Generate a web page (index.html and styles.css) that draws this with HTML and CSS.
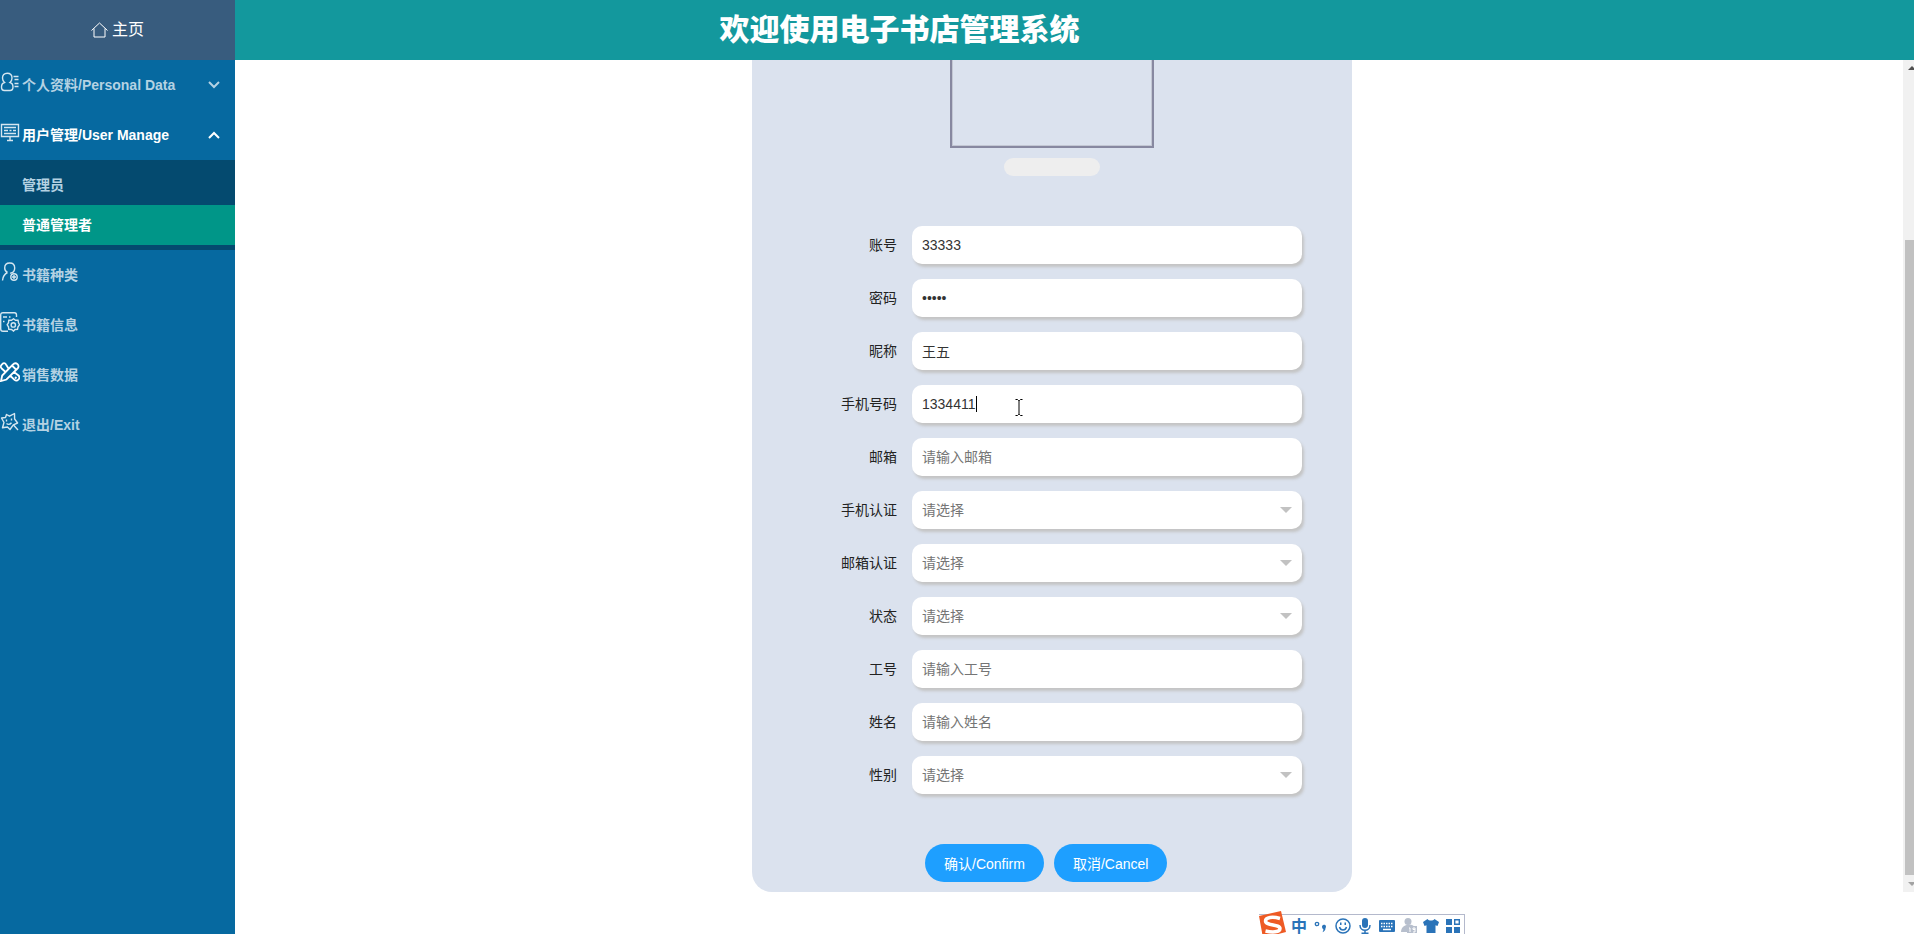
FILE: index.html
```html
<!DOCTYPE html>
<html lang="zh-CN">
<head>
    <meta charset="UTF-8">
    <meta name="viewport" content="width=device-width, initial-scale=1.0">
    <link rel="stylesheet" href="styles.css">
    <title>电子书店管理系统</title>
</head>
<body>
    <nav class="sidebar">
        <a class="home" href="#">
            <svg width="17" height="16" viewBox="0 0 17 16"><path d="M.5 8.500 8.500 1l8 7.500M3 6.500V15h11V6.500"/></svg>
            <span>主页</span>
        </a>

        <a class="menu-item" href="#">
            <svg class="menu-icon" viewBox="0 0 20 20"><path d="M7.200 1.200c3 0 4.800 2 4.800 4.800 0 2-.8 3.500-2 4.500 2 .5 3 2 3 4.500 0 2.500-.8 3.500-3 3.500H4.500c-2.200 0-3-1-3-3.500s1-4 3-4.500c-1.200-1-2-2.500-2-4.500 0-2.800 1.700-4.800 4.700-4.800zM13.500 4.500h5M14.500 7.500h4M14.500 11.500h4M14.500 14.500h4"/></svg>
            <span>个人资料/Personal Data</span>
            <svg class="chevron" viewBox="0 0 12 8"><path d="m1 1 5 5 5-5"/></svg>
        </a>
        <a class="menu-item open" href="#">
            <svg class="menu-icon" viewBox="0 0 20 20"><path d="M1.500 2.500h17v12h-17zM4 5.500h12M4 8.500h4M9.500 8.500h2M13 8.500h3M4 11.500h12M10 14.500v4M7 18.500h6"/></svg>
            <span>用户管理/User Manage</span>
            <svg class="chevron" viewBox="0 0 12 8"><path d="m1 7 5-5 5 5"/></svg>
        </a>
        <div class="submenu">
            <a href="#">管理员</a>
            <a class="active" href="#">普通管理者</a>
        </div>
        <a class="menu-item" href="#">
            <svg class="menu-icon" viewBox="0 0 20 20"><path d="M7.500 10.500C5.500 9.500 4.700 8 4.700 6c0-3 2-5 5-5s5 2 5 5-2 5-4.500 5.200M7.500 10.500c-3 1.500-4.700 4-5 8"/><circle cx="14" cy="15" r="3.200"/><path d="M12 15h4M14 13v4"/></svg>
            <span>书籍种类</span>
        </a>
        <a class="menu-item" href="#">
            <svg class="menu-icon" viewBox="0 0 20 20"><path d="M16.500 5V3c0-1.500-.8-2.300-2-2.300H3C1.500.7.700 1.500.7 3v14c0 1.500.8 2.300 2.300 2.300h5M3 5h4M9 5h1.500M3 9.500h1.500"/><path d="m13.500 6.800 2 1.500 2.500-.1.500 2.500 1 2.100-1.500 2-.5 2.600-2.500.1-1.500 1.600-2-1.600-2.700-.1-.3-2.600-1.300-2 1.300-2.100.3-2.500 2.700.1z"/><circle cx="13.300" cy="12.900" r="2.200"/></svg>
            <span>书籍信息</span>
        </a>
        <a class="menu-item" href="#">
            <svg class="menu-icon bold" viewBox="0 0 20 20"><path d="M1 19l1.200-5.500L13 2.500c1.300-1.600 3.200-1.600 4.500-.3s1.400 3 0 4.300L6.500 17.500zM12.500 4 16 7.500M8.500 6.500 6 2.500C5 .8 3.500.8 2 2.300S.3 5.300 1.700 6.500L5 9.500M14 10l4.500 3.500c1.200 1.200 1.200 2.700 0 4s-2.700 1.500-4 .3L10.500 14M15 16.500l1.500-1.500"/></svg>
            <span>销售数据</span>
        </a>
        <a class="menu-item" href="#">
            <svg class="menu-icon" viewBox="0 0 20 20"><path d="M9.500 4.200 14.500 1.500 14.600 7l3 4-4.300 1.800L10 17.500 7.500 15l-5 .8L4 10.500 1.500 6l4-.5L6.500 2.500z" stroke-linejoin="round"/><path d="m13.500 13 4.500 5M6.500 7.500v2M11.500 6.500v2M6.500 11.500c1.500 1.200 3.500 1 5-.8"/></svg>
            <span>退出/Exit</span>
        </a>
    </nav>

    <div class="page">
        <header class="topbar">
            <h1>欢迎使用电子书店管理系统</h1>
        </header>

        <main class="viewport">
            <div class="scroll-area">
                <form class="card">
                    <div class="avatar"></div>
                    <button class="upload" type="button" aria-label="上传头像"></button>

                    <div class="row">
                        <label for="account">账号</label>
                        <div class="field"><input id="account" type="text" value="33333"></div>
                    </div>
                    <div class="row">
                        <label for="password">密码</label>
                        <div class="field"><input id="password" type="password" value="12345"></div>
                    </div>
                    <div class="row">
                        <label for="nickname">昵称</label>
                        <div class="field"><input id="nickname" type="text" value="王五"></div>
                    </div>
                    <div class="row">
                        <label for="phone">手机号码</label>
                        <div class="field">
                            <input id="phone" type="text" value="1334411">
                            <span class="caret"></span>
                            <svg class="ibeam" viewBox="0 0 8 17"><path d="M.5.5h2l1 1h1l1-1h2M4 1.500v14M.5 16.500h2l1-1h1l1 1h2"/></svg>
                        </div>
                    </div>
                    <div class="row">
                        <label for="email">邮箱</label>
                        <div class="field"><input id="email" type="text" placeholder="请输入邮箱"></div>
                    </div>
                    <div class="row">
                        <label for="phone-auth">手机认证</label>
                        <div class="field select"><select id="phone-auth"><option>请选择</option></select></div>
                    </div>
                    <div class="row">
                        <label for="email-auth">邮箱认证</label>
                        <div class="field select"><select id="email-auth"><option>请选择</option></select></div>
                    </div>
                    <div class="row">
                        <label for="status">状态</label>
                        <div class="field select"><select id="status"><option>请选择</option></select></div>
                    </div>
                    <div class="row">
                        <label for="job-number">工号</label>
                        <div class="field"><input id="job-number" type="text" placeholder="请输入工号"></div>
                    </div>
                    <div class="row">
                        <label for="name">姓名</label>
                        <div class="field"><input id="name" type="text" placeholder="请输入姓名"></div>
                    </div>
                    <div class="row">
                        <label for="gender">性别</label>
                        <div class="field select"><select id="gender"><option>请选择</option></select></div>
                    </div>

                    <div class="actions">
                        <button class="btn" type="button">确认/Confirm</button>
                        <button class="btn" type="button">取消/Cancel</button>
                    </div>
                </form>
            </div>
            <div class="scrollbar">
                <span class="arrow up"></span>
                <span class="thumb"></span>
                <span class="arrow down"></span>
            </div>
        </main>
    </div>

    <!-- input method toolbar -->
    <div class="ime">
        <svg class="ime-logo" viewBox="0 0 28 28"><path d="M1 5 23 0l5 21-23 6z" fill="#ee5a24"/><path d="M22 7.500C15 5.500 7.500 6 7.500 10c0 5 14.500 3 14.500 7.500 0 4-8 4-14.500 2.500" fill="none" stroke="#fff" stroke-width="3.500"/></svg>
        <span class="ime-text">中</span>
        <svg class="ime-icon" viewBox="0 0 16 16"><circle cx="4" cy="6" r="1.700" fill="none" stroke="#2a73b8" stroke-width="1.300"/><path d="M9 8.500a2 2 0 1 1 3.500 1.500c0 2-1 3.500-3 4.200.8-1.200 1-2.200.8-3.200C9.400 10.700 9 9.600 9 8.500z"/></svg>
        <svg class="ime-icon" viewBox="0 0 16 16"><g fill="none" stroke="#2a73b8" stroke-width="1.500"><circle cx="8" cy="8" r="7"/><path d="M4.500 9c1 4 6 4 7 0"/></g><path d="M5 4.500h1.500v2.500H5zM9.500 4.500H11v2.500H9.500z"/></svg>
        <svg class="ime-icon" viewBox="0 0 16 16"><rect x="5" y="0" width="6" height="10" rx="3"/><path d="M3 7c0 7 10 7 10 0M8 12v3M4.500 15.300h7" fill="none" stroke="#2a73b8" stroke-width="1.500"/></svg>
        <svg class="ime-icon" viewBox="0 0 16 16"><rect x="0" y="2" width="16" height="12" rx="1"/><path d="M2 5.500h12M2 8.500h12" stroke="#fff" stroke-width="1.500" stroke-dasharray="1.500 1"/><path d="M4 11.500h8" stroke="#fff" stroke-width="1.500"/></svg>
        <svg class="ime-icon" viewBox="0 0 16 16"><g fill="#b7bfcd"><circle cx="7" cy="3.500" r="3.500"/><path d="M0 14c0-9 13-9 13-5v5z"/><rect x="6" y="8" width="10" height="7"/></g><path d="M8 10h1v4M14 11.500h-2V10h2v4h-2" fill="none" stroke="#fff"/></svg>
        <svg class="ime-icon" viewBox="0 0 16 16"><path d="M4.500 1C6 3 10 3 11.500 1L16 4l-1.500 4-2-.8V15h-9V7.200l-2 .8L0 4z"/></svg>
        <svg class="ime-icon" viewBox="0 0 16 16"><path d="M1 1h6v6H1zM1 9h6v6H1zM9 9h6v6H9z"/><path d="M9.700 1.700h4.600v4.600H9.700z" fill="none" stroke="#2a73b8" stroke-width="1.400"/></svg>
    </div>
</body>
</html>
```
FILE: styles.css
```css
* {
    box-sizing: border-box;
}

body {
    margin: 0;
    height: 100vh;
    display: flex;
    overflow: hidden;
    font-family: "Liberation Sans", "Noto Sans CJK SC", sans-serif;
    font-size: 14px;
    line-height: 20px;
    color: #222;
    background-color: #fff;
}

a {
    color: inherit;
    text-decoration: none;
}

/* sidebar */
.sidebar {
    flex: none;
    width: 235px;
    background-color: #0669a0;
    color: #b4d2e3;
    font-weight: bold;
}

.sidebar svg {
    fill: none;
    stroke: currentColor;
}

.home {
    display: flex;
    align-items: center;
    justify-content: center;
    gap: 4px;
    height: 60px;
    background-color: #385c7e;
    color: #fff;
    font-size: 16px;
    font-weight: normal;
}

.menu-item {
    display: flex;
    align-items: center;
    gap: 2px;
    height: 50px;
    padding-right: 15px;
}

.menu-item.open {
    color: #fff;
}

.menu-icon {
    flex: none;
    width: 20px;
    height: 20px;
    margin-bottom: 6px;
    color: #d5e6f0;
    stroke-width: 1.4;
}

.menu-icon.bold {
    color: #fff;
    stroke-width: 1.8;
}

.chevron {
    width: 12px;
    height: 8px;
    margin-left: auto;
    stroke-width: 2;
}

.submenu {
    padding: 5px 0;
    background-color: #044a6f;
}

.submenu a {
    display: block;
    padding: 0 22px;
    line-height: 40px;
}

.submenu .active {
    background-color: #009688;
    color: #fff;
}

/* right side */
.page {
    flex: 1;
    min-width: 0;
    display: flex;
    flex-direction: column;
    padding-bottom: 42px;
}

.topbar {
    flex: none;
    display: flex;
    align-items: center;
    justify-content: center;
    height: 60px;
    padding-right: 350px;
    background-color: #13989d;
    color: #fff;
}

.topbar h1 {
    margin: 0;
    font-size: 30px;
    font-weight: 900;
    line-height: 40px;
}

.viewport {
    flex: 1;
    min-height: 0;
    display: flex;
}

.scroll-area {
    flex: 1;
    display: flex;
    justify-content: center;
    align-items: flex-end;
    padding-right: 34px;
    overflow: hidden;
}

.card {
    width: 600px;
    padding: 50px 50px 10px;
    border-radius: 20px;
    background-color: #dbe2ee;
}

.avatar {
    width: 204px;
    height: 204px;
    margin: 0 auto;
    border: 2px solid #8788a0;
    box-shadow: inset 0 0 0 1px #c3c7d3;
}

.upload {
    display: block;
    width: 96px;
    height: 18px;
    margin: 10px auto 50px;
    padding: 0;
    border: none;
    border-radius: 9px;
    background-color: #eee;
}

.row {
    display: flex;
    margin-bottom: 15px;
}

.row label {
    width: 110px;
    padding: 9px 15px;
    text-align: right;
}

.field {
    flex: 1;
    position: relative;
}

.field input,
.field select {
    display: block;
    width: 100%;
    height: 38px;
    padding: 0 10px;
    border: none;
    border-radius: 10px;
    background-color: #fff;
    box-shadow: 2px 3px 3px #c4c4c4;
    color: #333;
    font-family: inherit;
    font-size: 14px;
    outline: none;
    appearance: none;
}

.field select,
.field input::placeholder {
    color: #757575;
}

.select::after {
    content: "";
    position: absolute;
    top: 16px;
    right: 10px;
    border: 6px solid transparent;
    border-top-color: #c2c2c2;
    border-bottom: none;
    pointer-events: none;
}

.caret {
    position: absolute;
    top: 11px;
    left: 64px;
    width: 1px;
    height: 16px;
    background-color: #000;
}

.ibeam {
    position: absolute;
    top: 14px;
    left: 103px;
    width: 8px;
    height: 17px;
    fill: none;
    stroke: #000;
}

.actions {
    display: flex;
    gap: 10px;
    margin-top: 50px;
    padding-left: 123px;
}

.btn {
    height: 38px;
    padding: 0 19px;
    border: none;
    border-radius: 19px;
    background-color: #1e9fff;
    color: #fff;
    font-family: inherit;
    font-size: 14px;
    cursor: pointer;
}

/* scrollbar column */
.scrollbar {
    flex: none;
    display: flex;
    flex-direction: column;
    width: 11px;
    padding: 6px 0 6px 2px;
    background-color: #f1f1f1;
    overflow: hidden;
}

.arrow {
    flex: none;
    width: 0;
    margin-left: 3px;
    border: 4px solid transparent;
}

.arrow.up {
    border-top-width: 0;
    border-bottom-color: #505050;
}

.arrow.down {
    border-bottom-width: 0;
    border-top-color: #a3a3a3;
    margin-top: 7px;
}

.thumb {
    flex: 1;
    margin-top: 170px;
    background-color: #c1c1c1;
}

/* input method toolbar */
.ime {
    position: fixed;
    right: 449px;
    bottom: -6px;
    display: flex;
    align-items: center;
    gap: 6px;
    height: 26px;
    padding: 0 3px 0 32px;
    border: 1px solid #b4b9cc;
    border-left: none;
    background-color: #fff;
    color: #2a73b8;
}

.ime-logo {
    position: absolute;
    top: -4px;
    left: -1px;
    width: 28px;
    height: 28px;
}

.ime-text {
    width: 16px;
    font-size: 16px;
    font-weight: bold;
    text-align: center;
}

.ime-icon {
    width: 16px;
    height: 16px;
    margin-bottom: 2px;
    fill: #2a73b8;
}
```
